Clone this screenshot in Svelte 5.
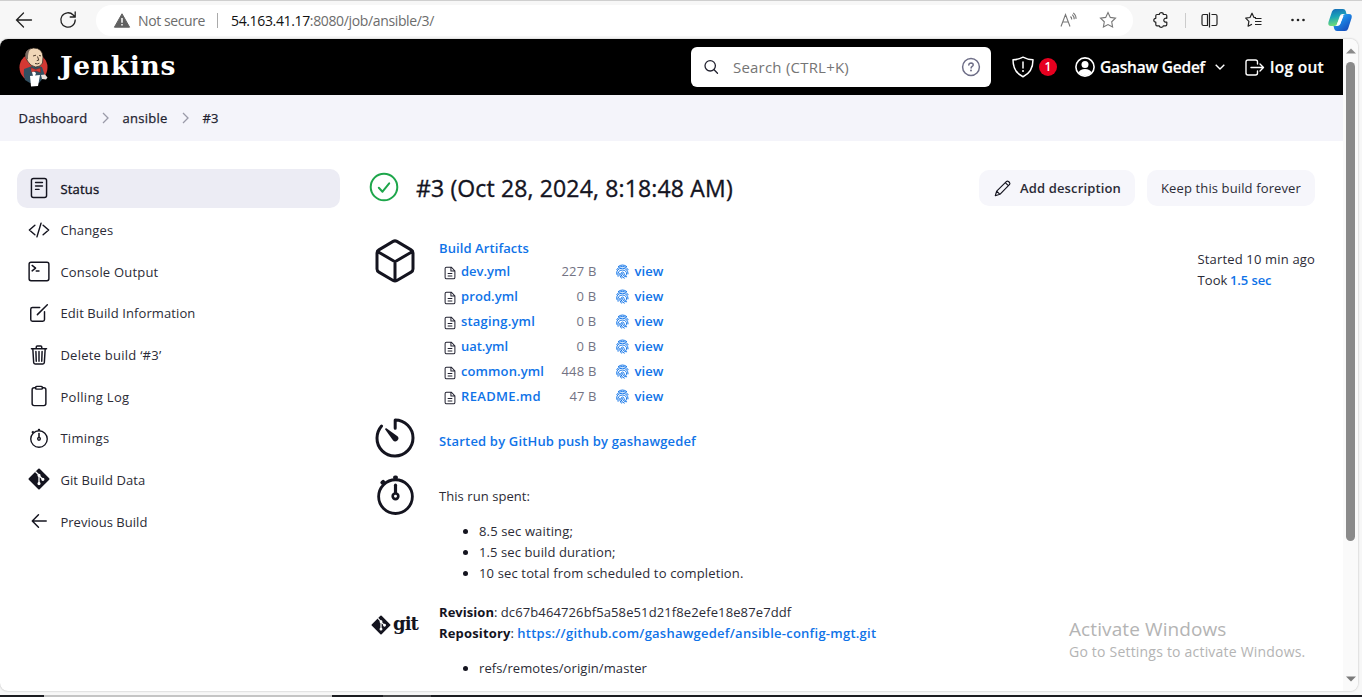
<script>
  // Spreads a label's letters so that it takes exactly the given width.
  function fit(node, width) {
    const natural = node.getBoundingClientRect().width;
    const count = [...node.textContent].length;
    node.style.letterSpacing = `${(width - natural) / count}px`;
  }

  const tasks = [
    { icon: 'status', label: 'Status', w: 39 },
    { icon: 'changes', label: 'Changes', w: 53 },
    { icon: 'console', label: 'Console Output', w: 98 },
    { icon: 'edit', label: 'Edit Build Information', w: 135 },
    { icon: 'trash', label: 'Delete build ‘#3’', w: 101 },
    { icon: 'clipboard', label: 'Polling Log', w: 69 },
    { icon: 'timer', label: 'Timings', w: 49 },
    { icon: 'git', label: 'Git Build Data', w: 85 },
    { icon: 'back', label: 'Previous Build', w: 87 }
  ];

  const artifacts = [
    { name: 'dev.yml', w: 49, size: '227 B', sw: 35 },
    { name: 'prod.yml', w: 57, size: '0 B', sw: 20 },
    { name: 'staging.yml', w: 74, size: '0 B', sw: 20 },
    { name: 'uat.yml', w: 47, size: '0 B', sw: 20 },
    { name: 'common.yml', w: 83, size: '448 B', sw: 35 },
    { name: 'README.md', w: 80, size: '47 B', sw: 27 }
  ];

  const spent = [
    { text: '8.5 sec waiting;', w: 94 },
    { text: '1.5 sec build duration;', w: 136.5 },
    { text: '10 sec total from scheduled to completion.', w: 264.5 }
  ];
</script>

{#snippet stopwatch()}
  <g fill="none" stroke="currentColor" stroke-width="32" stroke-linecap="round">
    <circle cx="256" cy="280" r="192" />
    <path d="M256 150v82" stroke-width="36" />
    <circle cx="256" cy="276" r="32" stroke-width="30" />
    <path d="M250 62h12M116 112l-10 10" stroke-width="44" />
  </g>
{/snippet}

{#snippet gitmark()}
  <path fill="currentColor" stroke="currentColor" stroke-width="44" stroke-linejoin="round" d="M256 34L478 256 256 478 34 256z" />
  <g stroke="#fff" fill="#fff" stroke-width="30">
    <path d="M172 80l84 84v210M256 176l86 84" fill="none" />
    <circle cx="256" cy="170" r="22" /><circle cx="256" cy="362" r="22" /><circle cx="346" cy="264" r="22" />
  </g>
{/snippet}

<div class="window">
  <div class="toolbar">
    <svg class="nav" width="18" height="18" viewBox="0 0 18 18"><path d="M16.500 9H1.500M8.500 2L1.500 9l7 7" /></svg>
    <svg class="nav reload" width="18" height="18" viewBox="0 0 18 18"><path d="M16.2 9a7.2 7.2 0 1 1-2-5l2 2M16.2 1v5h-5" /></svg>
    <div class="address">
      <svg width="16" height="15" viewBox="0 0 16 15"><path d="M8 .8L15.6 14.2H.4z" fill="#616161" stroke="#616161" stroke-linejoin="round" /><path d="M8 5v4.7M8 11v1.6" stroke="#fff" stroke-width="1.5" /></svg>
      <span class="insecure"><span class="t" use:fit={67}>Not secure</span></span>
      <i class="bar"></i>
      <span class="url"><span class="t" use:fit={203}><b>54.163.41.17</b>:8080/job/ansible/3/</span></span>
      <svg class="read" width="18" height="16" viewBox="0 0 18 16"><path d="M1 14.500L5.500 2.500 10 14.500M2.800 10h5.400M10.500 4.500q1.300 1.300 1.200 3M12.300 2.700q2 2 1.900 4.600M13.300.9q3 2.500 2.700 6" /></svg>
      <svg class="star" width="18" height="18" viewBox="0 0 18 18"><path d="M9 1.500l2.300 4.900 5.200.7-3.800 3.700.9 5.300L9 13.600l-4.600 2.500.9-5.300L1.500 7.100l5.200-.7z" /></svg>
    </div>
    <div class="tools">
      <svg width="16" height="16" viewBox="0 0 16 16"><path d="M4 2.500h2.300C6.300 1.200 7.300.7 8.300.7s2 .5 2 1.800h2.200q1.300 0 1.300 1.300v2.500c-1.500-.3-3 .3-3 1.900s1.500 2.200 3 1.900v2.400q0 1.300-1.300 1.300h-2.200c0 1-1 1.500-2 1.500s-2-.5-2-1.500H4q-1.200 0-1.200-1.300V10C1.500 10 .8 9.200.8 8.200s.7-1.900 2-1.900V3.800Q2.800 2.500 4 2.500z" /></svg>
      <i class="bar"></i>
      <svg width="17" height="16" viewBox="0 0 17 16"><path d="M6.500 2.500H2.500a1.500 1.500 0 0 0-1.500 1.500v8a1.500 1.500 0 0 0 1.500 1.500h4zM10.500 2.500h4a1.500 1.500 0 0 1 1.500 1.500v8a1.500 1.500 0 0 1-1.500 1.500h-4M8.500 .5v15" /></svg>
      <svg width="18" height="17" viewBox="0 0 18 17"><path d="M11 5.700L9 5.500 7 1.200 5 5.500l-4.300.6 3.200 3.200-.8 4.900L7 12.200M10 6.500h6.500M10 9.500h6.500M10 12.500h6.500" /></svg>
      <svg width="16" height="4" viewBox="0 0 16 4"><g fill="#222" stroke="none"><circle cx="2.500" cy="2" r="1.300" /><circle cx="8" cy="2" r="1.300" /><circle cx="13.500" cy="2" r="1.300" /></g></svg>
      <svg class="copilot" width="24" height="24" viewBox="0 0 24 24">
        <defs>
          <linearGradient id="ca" x2="0.2" y2="1"><stop offset="0" stop-color="#1668b8" /><stop offset=".5" stop-color="#1aa3b8" /><stop offset="1" stop-color="#6edb78" /></linearGradient>
          <linearGradient id="cb" x2="0.8" y2="1"><stop offset="0" stop-color="#36c3f3" /><stop offset=".5" stop-color="#1b7fe0" /><stop offset="1" stop-color="#1749b8" /></linearGradient>
        </defs>
        <path stroke="none" fill="url(#ca)" d="M7 1h8q2 0 2.700 2L18.500 6h-4q-2 0-2.700 2L9 16q-.5 2-2.500 2H3Q-.5 18 .5 14L4 3.500Q5 1 7 1z" />
        <path stroke="none" fill="url(#cb)" d="M17.500 6H21q3.500 0 2.600 4l-3.400 10.500q-.8 2.500-3.200 2.500H9q-2 0-2.700-2L5.500 18h4q2 0 2.700-2L15 8q.5-2 2.500-2z" />
        <path stroke="none" fill="#fff" d="M12.500 8h3L12 16.500H8.800z" />
      </svg>
    </div>
  </div>

  <div class="view">
    <div class="page">
      <header>
        <svg class="butler" width="30" height="40" viewBox="0 0 30 40">
          <circle cx="14.500" cy="20.500" r="14" fill="#d33833" />
          <path d="M5 22q-1 6 1 11l5 3h9l6-7-3-9-7-2z" fill="#335061" />
          <path d="M7 11Q5 2 14.500 1q9 0 9.500 9l-.5 6q-2 4-7 4-5.500-1-8-6z" fill="#f0d6b7" stroke="#241b14" stroke-width=".7" />
          <path d="M6.500 11Q5 3 12 1.500 8.500 5 9 12.500z" fill="#7a6a61" />
          <path d="M14 9l3-.8M20 8.500l2 .4M18.500 9.500l1.300 3.600-2 .5M16 16.500q2.500 1 4.500-.4" stroke="#402d20" stroke-width=".9" fill="none" />
          <path d="M12 22l5 4-2 6z" fill="#fff" />
          <path d="M12 20.500l4.500 2 5-1.500v4.500l-4.500-1.500-4.500 1z" fill="#d33833" stroke="#7d1717" stroke-width=".4" />
          <path d="M11 29l10-1-2 11-7 .6z" fill="#fff" />
          <path d="M22 28l4-.5 2.500 3-1.500 2-4-.5z" fill="#e8e0dc" />
        </svg>
        <span class="brand"><span class="t" use:fit={116}>Jenkins</span></span>
        <div class="search">
          <svg width="16" height="16" viewBox="0 0 16 16"><g fill="none" stroke="#222230" stroke-width="1.300" stroke-linecap="round"><circle cx="6.200" cy="6.800" r="5.200" /><path d="M10.100 10.800L13.500 14.200" /></g></svg>
          <span class="ph"><span class="t" use:fit={116}>Search (CTRL+K)</span></span>
          <svg width="20" height="20" viewBox="0 0 20 20"><g fill="none" stroke="#6f6f88" stroke-width="1.500" stroke-linecap="round"><circle cx="10" cy="10" r="8.400" /><path d="M7.800 8q.2-2 2.300-2 2.100.2 2.100 1.900c0 1.500-2.100 1.500-2.100 3.100" /></g><circle cx="10" cy="13.500" r="1" fill="#6f6f88" /></svg>
        </div>
        <svg class="shield" width="22" height="22" viewBox="0 0 22 22"><path d="M11 1.200Q6 3.800 1 3.800C1 12 4 17.500 11 20.800 18 17.500 21 12 21 3.800q-5 0-10-2.600zM11 6v6" fill="none" stroke="#fff" stroke-width="1.500" stroke-linejoin="round" stroke-linecap="round" /><circle cx="11" cy="15" r="1" fill="#fff" /></svg>
        <span class="badge">1</span>
        <svg class="avatar" width="20" height="20" viewBox="0 0 20 20"><circle cx="10" cy="10" r="9.100" fill="none" stroke="#fff" stroke-width="1.600" /><circle cx="10" cy="7.600" r="3.500" fill="#fff" /><path d="M3.500 15.500Q5 12 10 12t6.500 3.500Q14 18.500 10 18.500t-6.500-3z" fill="#fff" /></svg>
        <span class="user"><span class="t" use:fit={105}>Gashaw Gedef</span></span>
        <svg class="chev" width="10" height="6" viewBox="0 0 10 6"><path d="M.7.7L5 5 9.300.7" fill="none" stroke="#fff" stroke-width="1.400" /></svg>
        <svg class="exit" width="20" height="17" viewBox="0 0 20 17"><path d="M12.500 5V3q0-2-2-2H3Q1 1 1 3v11q0 2 2 2h7.500q2 0 2-2v-2M6 8.500h12.500M15 5l3.500 3.500L15 12" fill="none" stroke="#fff" stroke-width="1.400" stroke-linecap="round" stroke-linejoin="round" /></svg>
        <span class="user"><span class="t" use:fit={54}>log out</span></span>
      </header>

      <nav>
        <span class="t" use:fit={69}>Dashboard</span>
        <svg width="7" height="12" viewBox="0 0 7 12"><path d="M1 1l5 5-5 5" /></svg>
        <span class="t" use:fit={45}>ansible</span>
        <svg width="7" height="12" viewBox="0 0 7 12"><path d="M1 1l5 5-5 5" /></svg>
        <span class="t" use:fit={16}>#3</span>
      </nav>

      <div class="body">
        <aside>
          {#each tasks as task, i}
            <div class="task" class:active={i === 0}>
              <svg width="22" height="22" viewBox="0 0 512 512">
                {#if task.icon === 'status'}
                  <g class="ln"><rect x="80" y="34" width="352" height="444" rx="48" /><path d="M176 128h160M176 208h160M176 288h80" /></g>
                {:else if task.icon === 'changes'}
                  <g class="ln"><path d="M160 368L32 256l128-112M352 368l128-112-128-112M304 96l-96 320" /></g>
                {:else if task.icon === 'console'}
                  <g class="ln"><rect x="26" y="52" width="460" height="430" rx="44" /><path d="M96 126l80 64-80 64M192 254h64" /></g>
                {:else if task.icon === 'edit'}
                  <g class="ln"><path d="M384 224v184a40 40 0 0 1-40 40H104a40 40 0 0 1-40-40V168a40 40 0 0 1 40-40h168M218 294L450 62" /></g>
                {:else if task.icon === 'trash'}
                  <g class="ln"><path d="M112 112l20 320c1 18 14 32 32 32h184c18 0 31-14 32-32l20-320M80 112h352M192 112V72q0-24 24-24h80q24 0 24 24v40M256 176v224M184 176l8 224M328 176l-8 224" /></g>
                {:else if task.icon === 'clipboard'}
                  <g class="ln"><path d="M336 64h32a48 48 0 0 1 48 48v320a48 48 0 0 1-48 48H144a48 48 0 0 1-48-48V112a48 48 0 0 1 48-48h32" /><rect x="176" y="32" width="160" height="64" rx="26" /></g>
                {:else if task.icon === 'timer'}
                  {@render stopwatch()}
                {:else if task.icon === 'git'}
                  {@render gitmark()}
                {:else}
                  <g class="ln"><path d="M244 400L100 256l144-144M112 256h312" /></g>
                {/if}
              </svg>
              <span class="t" use:fit={task.w}>{task.label}</span>
            </div>
          {/each}
        </aside>

        <main>
          <div class="title">
            <svg class="ok" width="30" height="30" viewBox="0 0 30 30"><g fill="none" stroke="#1ea64b" stroke-width="2" stroke-linecap="round" stroke-linejoin="round"><circle cx="15" cy="15" r="13.300" /><path d="M9.800 15.800l3.700 3.900 6.700-8.400" /></g></svg>
            <h1><span class="t" use:fit={268}>#3 (Oct 28, 2024, 8:18:48</span><span class="t" use:fit={49}>{' AM)'}</span></h1>
            <div class="btn strong">
              <svg width="17" height="17" viewBox="0 0 17 17"><path d="M1.300 15.700l1.400-4.600L12.300 1.600q1-1 2.200-.1l1 1q.9 1.200-.1 2.200L5.900 14.300zM11.300 2.700l3 3M2.700 11.100l3.200 3.200" fill="none" stroke="#14141f" stroke-width="1.200" stroke-linejoin="round" /></svg>
              <span class="t" use:fit={101}>Add description</span>
            </div>
            <div class="btn"><span class="t" use:fit={140}>Keep this build forever</span></div>
          </div>

          <div class="columns">
            <div class="summary">
              <section class="arts">
                <svg class="big" width="48" height="48" viewBox="0 0 512 512"><path class="ln2" d="M448 341V171a40 40 0 0 0-20-34L276 47a40 40 0 0 0-40 0L84 137a40 40 0 0 0-20 34v170a40 40 0 0 0 20 34l152 89a40 40 0 0 0 40 0l152-89a40 40 0 0 0 20-34zM69 154l187 110 187-110M256 463V264" /></svg>
                <div>
                  <div class="link first"><span class="t" use:fit={90}>Build Artifacts</span></div>
                  {#each artifacts as a}
                    <div class="file">
                      <svg class="doc" width="12" height="14" viewBox="0 0 13 14"><path d="M8 .7H2.700q-1.500 0-1.500 1.500v9.600q0 1.500 1.500 1.500h7.600q1.500 0 1.500-1.500V4.700zM7.500.7v4.200h4.200M4 7.500h5M4 10.200h5" fill="none" stroke="#222230" stroke-width="1.100" /></svg>
                      <span class="name link"><span class="t" use:fit={a.w}>{a.name}</span></span>
                      <span class="size"><span class="t" use:fit={a.sw}>{a.size}</span></span>
                      <svg class="print" width="13" height="15" viewBox="0 0 14 16"><g fill="none" stroke="#0f73e8" stroke-width="1.050" stroke-linecap="round"><path d="M2.500 2.600Q7-.8 11.500 2.600M.8 5.800Q2.600 2.500 7 2.500t6.200 3.600M.8 11Q-.2 4.500 7 4.500q5.800 0 6 6M2.200 13.200Q1 6.500 7 6.400q4.500.2 4.500 4.600 0 1.300-1.500 1.200-1.400-.2-1.300-2Q8.500 8.600 7 8.600q-1.800.2-1.600 2.600.4 3 3.600 4M7 10.400q.2 3.200 4.500 3.300M5.800 15.200Q3.500 12.500 4 10" /></g></svg>
                      <span class="link"><span class="t" use:fit={29}>view</span></span>
                    </div>
                  {/each}
                </div>
              </section>

              <section class="cause">
                <svg class="big" width="48" height="48" viewBox="0 0 512 512"><path class="ln2" d="M112.900 129A198 198 0 0 0 64 256c-2 107 86 194 194 192 104-1 190-88 190-192 0-106-86-192-190-192v87" /><path d="M234 279L152 164a9 9 0 0 1 12-12l115 82a32 32 0 1 1-45 45z" fill="currentColor" /></svg>
                <div class="link"><span class="t" use:fit={257}>Started by GitHub push by gashawgedef</span></div>
              </section>

              <section class="spent">
                <svg class="big" width="45" height="45" viewBox="0 0 512 512">{@render stopwatch()}</svg>
                <div>
                  <div><span class="t" use:fit={91}>This run spent:</span></div>
                  <ul>
                    {#each spent as s}<li><span class="t" use:fit={s.w}>{s.text}</span></li>{/each}
                  </ul>
                </div>
              </section>

              <section class="scm">
                <div class="gitlogo">
                  <svg width="20" height="20" viewBox="0 0 512 512">{@render gitmark()}</svg>
                  <span class="t" use:fit={25}>git</span>
                </div>
                <div>
                  <div class="kv"><b class="t" use:fit={55}>Revision</b>: <span class="t" use:fit={290.5}>dc67b464726bf5a58e51d21f8e2efe18e87e7ddf</span></div>
                  <div class="kv"><b class="t" use:fit={71.5}>Repository</b>: <span class="link t" use:fit={359}>https://github.com/gashawgedef/ansible-config-mgt.git</span></div>
                  <ul><li><span class="t" use:fit={168}>refs/remotes/origin/master</span></li></ul>
                </div>
              </section>
            </div>
            <div class="when">
              <div><span class="t" use:fit={117.5}>Started 10 min ago</span></div>
              <div><span class="took t" use:fit={30}>Took</span><span class="link t" use:fit={41.5}>1.5 sec</span></div>
            </div>
          </div>
        </main>
      </div>
    </div>

    <div class="scroll">
      <svg width="10" height="6" viewBox="0 0 10 6"><path d="M0 5.500L5 .5l5 5z" fill="#8a8a8a" /></svg>
      <div class="thumb"></div>
      <svg width="10" height="6" viewBox="0 0 10 6"><path d="M0 .5L5 5.500l5-5z" fill="#7a7a7a" /></svg>
    </div>
  </div>

  <div class="taskbar"><i></i><i></i><i></i><i></i></div>

  <div class="activate">
    <div class="a1"><span class="t" use:fit={157.5}>Activate Windows</span></div>
    <div class="a2"><span class="t" use:fit={236.5}>Go to Settings to activate Windows.</span></div>
  </div>
</div>

<style>
  :global(body) { margin: 0; overflow: hidden; }
  .window {
    position: relative;
    width: 1362px; height: 697px;
    display: flex; flex-direction: column;
    background: #f7f7f7;
    color: #2b2b36;
    font: 400 13px/21px "Open Sans", "Noto Sans", sans-serif;
    overflow: hidden;
    white-space: nowrap;
  }
  svg { display: block; flex: none; overflow: visible; }
  .t { display: inline-block; white-space: pre; }
  .link { color: #0f73e8; font-weight: 600; }

  .toolbar {
    box-sizing: border-box; height: 39px; flex: none;
    display: flex; align-items: center;
    padding: 0 10px 0 15px;
    border-top: 1px solid #cfcfcf;
  }
  .nav { fill: none; stroke: #222; stroke-width: 1.3; stroke-linecap: round; }
  .reload { margin-left: 26px; }
  .address {
    box-sizing: border-box; width: 1037px; height: 31px; margin-left: 19px; flex: none;
    display: flex; align-items: center; padding: 0 16px 0 18px;
    border-radius: 16px; background: #fff; color: #6c6c6c;
    font-size: 14px;
  }
  .insecure { margin-left: 8px; width: 79px; }
  .bar { width: 1px; height: 15px; background: #aaa; }
  .url { margin-left: 13px; flex: 1; }
  .url b { font-weight: 400; color: #111; }
  .read, .star { fill: none; stroke: #777; stroke-width: 1.1; }
  .star { margin-left: 21px; }
  .tools { display: flex; align-items: center; margin-left: 20px; }
  .tools svg { fill: none; stroke: #222; stroke-width: 1.2; stroke-linejoin: round; }
  .tools .bar { margin: 0 15px 0 16px; background: #ccc; }
  .tools svg:nth-of-type(3) { margin-left: 27px; }
  .tools svg:nth-of-type(4) { margin-left: 27px; }
  .tools svg.copilot { margin-left: 22px; }

  .view {
    height: 652px; width: 1358px; flex: none;
    display: flex; overflow: hidden;
    background: #fff; border-radius: 8px;
    box-shadow: 0 0 2px #aaa;
  }
  .page { width: 1343px; }
  header {
    box-sizing: border-box; height: 56px; background: #000; color: #fff;
    display: flex; align-items: center; padding-left: 19px;
  }
  .brand { margin-left: 11px; width: 631px; font: 700 26.5px/34px "DejaVu Serif", serif; margin-top: -2px; }
  .search {
    box-sizing: border-box; width: 300px; height: 40px; border-radius: 6px; background: #fff;
    display: flex; align-items: center; padding: 0 10px 0 13px;
  }
  .ph { flex: 1; margin-left: 13px; color: #757575; font-size: 15px; }
  .shield { margin-left: 21px; }
  .badge {
    width: 18px; height: 18px; margin-left: 5px; border-radius: 50%;
    background: #e6001f; font: 600 12px/18px "Open Sans", sans-serif; text-align: center;
  }
  .avatar { margin-left: 18px; }
  .user { margin-left: 5px; font-size: 15.5px; font-weight: 600; -webkit-text-stroke: 0.2px #fff; }
  .chev { margin-left: 10px; }
  .exit { margin-left: 20px; }

  nav {
    height: 46px; box-sizing: border-box; padding-left: 18.5px;
    display: flex; align-items: center; gap: 14px;
    background: #f4f4fa; color: #222230; -webkit-text-stroke: 0.25px #222230;
  }
  nav svg { fill: none; stroke: #9a9aa8; stroke-width: 1.3; }

  .body { display: flex; padding: 28px 0 0 17px; }
  aside { width: 323px; display: flex; flex-direction: column; gap: 2.65px; }
  .task {
    box-sizing: border-box; height: 39px; border-radius: 10px;
    display: flex; align-items: center; gap: 10.4px; padding-left: 11px;
  }
  .task svg { color: #14141f; margin-top: -1px; }
  .task .t { margin-top: 1px; }
  .active { background: #ececf4; color: #14141f; -webkit-text-stroke: 0.35px #14141f; }
  .ln { fill: none; stroke: currentColor; stroke-width: 34; stroke-linecap: round; stroke-linejoin: round; }
  .ln2 { fill: none; stroke: currentColor; stroke-width: 32; stroke-linecap: round; stroke-linejoin: round; }

  main { width: 946px; margin-left: 29px; }
  .title { display: flex; align-items: center; height: 38px; }
  .ok { margin-top: -2px; }
  h1 { margin: 0 0 0 17px; flex: 1; font-size: 23px; font-weight: 400; line-height: 38px; color: #14141f; -webkit-text-stroke: 0.35px #14141f; }
  .btn {
    box-sizing: border-box; height: 36px; border-radius: 10px; background: #f6f6fb;
    display: flex; align-items: center; gap: 9px; padding: 0 14px; margin-left: 12px;
  }
  .btn.strong { font-weight: 600; padding-left: 15px; }
  .columns { display: flex; justify-content: space-between; }
  .summary { padding-top: 31px; margin-left: 2px; }
  section { display: flex; }
  .big { width: 48px; margin-right: 20px; color: #14141f; }
  .arts { height: 171px; }
  .arts .big { margin-top: -1px; }
  .first { height: 21px; }
  .file { display: flex; align-items: center; height: 25px; padding-left: 5px; }
  .doc { margin-top: 3px; }
  .name { margin-left: 5px; width: 84px; }
  .size { width: 51.5px; text-align: right; color: #737383; }
  .print { margin: 0 5.500px 0 19.500px; }
  .cause { height: 48px; align-items: center; margin-top: 5px; }
  .cause .link { margin-top: 6px; }
  .spent { margin-top: 24px; }
  .spent .big { width: 45px; margin: -14px 21px 0 2px; }
  ul { margin: 14px 0 0; padding-left: 40px; }
  li::marker { color: #14141f; }
  .scm { margin-top: 18px; }
  .kv b { color: #14141f; }
  .gitlogo { display: flex; gap: 2px; width: 68px; align-items: center; height: 46px; color: #14141f; }
  .gitlogo span { font: 700 18px/22px "DejaVu Serif", serif; margin-top: -2px; }
  .when { padding-top: 42px; width: 117.5px; }
  .took { margin-right: 2.5px; }

  .scroll { width: 15px; background: #fafafa; display: flex; flex-direction: column; align-items: center; padding: 9px 0 9px; box-sizing: border-box; }
  .thumb { width: 9px; height: 479px; margin: 8px 0 auto; border-radius: 5px; background: #8a8a8a; }

  .taskbar { height: 2px; margin-top: 4px; display: flex; background: #1b1c20; }
  .taskbar i:nth-child(1) { width: 44px; }
  .taskbar i:nth-child(2) { width: 288px; background: #c4c4c4; }
  .taskbar i:nth-child(3) { width: 51px; }
  .taskbar i:nth-child(4) { width: 48px; background: #4a4a4c; }

  .activate { position: absolute; left: 1069px; top: 616px; color: #b4b4b4; }
  .a1 { font-size: 19px; line-height: 26px; }
  .a2 { font-size: 14px; line-height: 20px; }
</style>
